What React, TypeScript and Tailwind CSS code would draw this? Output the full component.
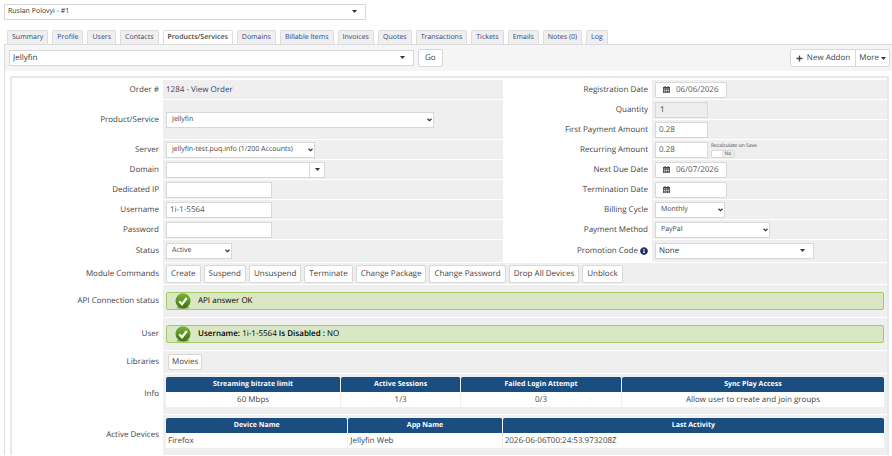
import type { ReactNode } from 'react';
import clsx from 'clsx';
import { FaPlus, FaInfoCircle } from 'react-icons/fa';

const tabs = [
  'Summary',
  'Profile',
  'Users',
  'Contacts',
  'Products/Services',
  'Domains',
  'Billable Items',
  'Invoices',
  'Quotes',
  'Transactions',
  'Tickets',
  'Emails',
  'Notes (0)',
  'Log',
];

const commands = [
  'Create',
  'Suspend',
  'Unsuspend',
  'Terminate',
  'Change Package',
  'Change Password',
  'Drop All Devices',
  'Unblock',
];

const field = 'h-4 border border-[#d8d8d8] bg-white px-[3px] leading-3 outline-none';
const button = 'h-[18px] border border-[#d8d8d8] bg-white leading-4 text-[#444] hover:bg-gray-50';

function Caret({ className }: { className?: string }) {
  return (
    <svg viewBox="0 0 10 6" className={clsx('pointer-events-none h-[3px] w-[5px] fill-[#333]', className)}>
      <path d="M0 0h10L5 6z" />
    </svg>
  );
}

interface SelectProps {
  id: string;
  value: string;
  className: string;
  label?: string;
  search?: boolean;
}

function Select({ id, value, className, label, search }: SelectProps) {
  return (
    <div className={clsx('relative', className)}>
      <select
        id={id}
        aria-label={label}
        className={clsx(
          field,
          'block w-full appearance-none',
          search ? 'text-[#333]' : 'pl-[5px] text-[7px] text-[#444]',
        )}
      >
        <option>{value}</option>
      </select>
      {search ? (
        <Caret className="absolute top-[6px] right-[9px]" />
      ) : (
        <svg viewBox="0 0 10 8" className="pointer-events-none absolute top-[6px] right-[2px] h-1 w-[5px]">
          <path d="M1 1.5l4 4 4-4" fill="none" stroke="#333" strokeWidth="2.4" />
        </svg>
      )}
    </div>
  );
}

function DateInput({ id, value }: { id: string; value?: string }) {
  return (
    <div className="flex h-4 w-[72px] items-center rounded-xs border border-[#d8d8d8] bg-white pl-[7px]">
      <svg viewBox="0 0 14 14" className="size-[7px] shrink-0">
        <path d="M3 0h2v2H3zM9 0h2v2H9zM0 2h14v12H0z" fill="#444" />
        <path d="M1.500 5h3v2.200h-3zM5.500 5h3v2.200h-3zM9.500 5h3v2.200h-3zM1.500 8h3v2h-3zM5.500 8h3v2h-3zM9.500 8h3v2h-3zM1.500 11h3v2h-3zM5.500 11h3v2h-3zM9.500 11h3v2h-3z" fill="#ccc" />
      </svg>
      <input id={id} defaultValue={value} className="ml-[6px] w-full min-w-0 leading-3 text-[#555] outline-none" />
    </div>
  );
}

function Label({ htmlFor, children, tall }: { htmlFor?: string; children: ReactNode; tall?: boolean }) {
  const cls = clsx('flex items-center justify-end pr-1 text-right', tall && 'row-span-2');
  if (!htmlFor) return <div className={cls}>{children}</div>;
  return <label htmlFor={htmlFor} className={cls}>{children}</label>;
}

function Cell({ children, className }: { children: ReactNode; className?: string }) {
  return <div className={clsx('flex min-w-0 items-center bg-[#efefef] px-[3px]', className)}>{children}</div>;
}

function WideRow({ label, children, className }: { label: string; children: ReactNode; className: string }) {
  return (
    <>
      <Label>{label}</Label>
      <Cell className={clsx('col-span-3', className)}>{children}</Cell>
    </>
  );
}

function SuccessBox({ children }: { children: ReactNode }) {
  return (
    <div className="flex h-[18px] w-full items-center gap-[7px] rounded-xs border border-[#a5ca62] bg-[#d9e7c4] pl-2 text-black">
      <svg viewBox="0 0 32 32" className="size-4">
        <defs>
          <linearGradient id="ok" x1="0" y1="0" x2="0" y2="1">
            <stop offset="0" stopColor="#7fb23a" />
            <stop offset="0.5" stopColor="#5b9420" />
            <stop offset="1" stopColor="#3c720c" />
          </linearGradient>
        </defs>
        <ellipse cx="16" cy="29" rx="13" ry="3" fill="#8aa368" />
        <circle cx="16" cy="15.5" r="15" fill="url(#ok)" />
        <path d="M8.500 16.500l5.500 6 9.500-12.500" fill="none" stroke="#fff" strokeWidth="4.500" />
      </svg>
      <p>{children}</p>
    </div>
  );
}

interface DataTableProps {
  columns: { title: string; width: string }[];
  row: string[];
  center?: boolean;
}

function DataTable({ columns, row, center }: DataTableProps) {
  return (
    <table className="w-full table-fixed border-separate border-spacing-0">
      <thead>
        <tr className="h-[15px] text-[7px] text-white">
          {columns.map((c) => (
            <th
              key={c.title}
              className={clsx(c.width, 'rounded-t-xs border-r border-[#efefef] bg-[#1a4d80] p-0 text-center font-bold last:border-r-0')}
            >
              {c.title}
            </th>
          ))}
        </tr>
      </thead>
      <tbody>
        <tr className="h-[15px]">
          {row.map((value) => (
            <td
              key={value}
              className={clsx('border-r border-[#efefef] bg-white px-[2px] py-0 last:border-r-0', center && 'text-center')}
            >
              {value}
            </td>
          ))}
        </tr>
      </tbody>
    </table>
  );
}

export default function App() {
  return (
    <div className="bg-white pt-1 pl-1 font-['Open_Sans','Noto_Sans',sans-serif] text-[8px] leading-3 text-[#444] [text-rendering:geometricPrecision] [&_*]:[text-rendering:inherit]">
      <Select id="client" label="Client" value="Ruslan Polovyi - #1" className="w-[362px] text-[7px]" search />

      <nav className="mt-[10px] flex gap-1 pl-[3px] text-[7px]">
        {tabs.map((tab) => (
          <a
            key={tab}
            href="#"
            className={clsx(
              'h-[14px] rounded-t-xs border border-b-0 border-[#dcdcdc] px-1 leading-[14px] whitespace-nowrap',
              tab === 'Products/Services' ? 'bg-white font-semibold text-[#444]' : 'bg-[#efefef] text-[#34457a]',
            )}
          >
            {tab}
          </a>
        ))}
      </nav>

      <main className="border-l border-[#dcdcdc]">
        <div className="flex h-[27px] items-center border-t border-[#dcdcdc] bg-[#f5f5f5] pr-[2px] pl-1">
          <Select id="service" label="Service" value="Jellyfin" className="w-[405px]" search />
          <button type="button" className={clsx(button, 'ml-1 rounded-xs px-[6px]')}>Go</button>
          <div className="ml-auto flex">
            <button type="button" className={clsx(button, 'flex items-center gap-1 rounded-l-xs px-[5px]')}>
              <FaPlus className="size-[7px]" /> New Addon
            </button>
            <button type="button" className={clsx(button, '-ml-px flex items-center gap-[2px] rounded-r-xs px-[3px]')}>
              More <Caret />
            </button>
          </div>
        </div>

        <form className="mt-[5px] mr-[3px] ml-[5px] grid grid-cols-[151fr_340fr_149fr_235fr] gap-y-px rounded-t-xs border-2 border-b-0 border-[#e3e9ed] pt-[2px]">
          <Label>Order #</Label>
          <Cell className="h-[19px]">
            <span>1284 - <a href="#" className="text-[#2b3f73]">View Order</a></span>
          </Cell>
          <Label htmlFor="regdate">Registration Date</Label>
          <Cell><DateInput id="regdate" value="06/06/2026" /></Cell>

          <Label htmlFor="product" tall>Product/Service</Label>
          <Cell className="row-span-2">
            <Select id="product" value="Jellyfin" className="w-[268px]" />
          </Cell>
          <Label htmlFor="qty">Quantity</Label>
          <Cell className="h-[19px]">
            <input id="qty" defaultValue="1" disabled className="h-4 w-[53px] border border-[#d8d8d8] bg-[#ededed] px-1" />
          </Cell>
          <Label htmlFor="first">First Payment Amount</Label>
          <Cell className="h-[19px]">
            <input id="first" defaultValue="0.28" className={clsx(field, 'w-[53px] text-[#555]')} />
          </Cell>

          <Label htmlFor="server">Server</Label>
          <Cell className="h-[19px]">
            <Select id="server" value="jellyfin-test.puq.info (1/200 Accounts)" className="w-[149px]" />
          </Cell>
          <Label htmlFor="recurring">Recurring Amount</Label>
          <Cell>
            <input id="recurring" defaultValue="0.28" className={clsx(field, 'w-[53px] text-[#555]')} />
            <label className="ml-[3px] text-[5px] leading-2">
              <span className="block">Recalculate on Save</span>
              <input type="checkbox" className="sr-only" />
              <span className="flex h-2 w-6 overflow-hidden rounded-xs border border-[#d8d8d8] bg-white leading-[6px]">
                <span className="ml-auto w-3 bg-[#ececec] text-center">No</span>
              </span>
            </label>
          </Cell>

          <Label htmlFor="domain">Domain</Label>
          <Cell className="h-[19px]">
            <input id="domain" className={clsx(field, 'w-[144px]')} />
            <button type="button" aria-label="Domain options" className="-ml-px flex h-4 w-4 items-center justify-center border border-[#d8d8d8] bg-white">
              <Caret />
            </button>
          </Cell>
          <Label htmlFor="nextdue">Next Due Date</Label>
          <Cell><DateInput id="nextdue" value="06/07/2026" /></Cell>

          <Label htmlFor="ip">Dedicated IP</Label>
          <Cell className="h-[19px]">
            <input id="ip" className={clsx(field, 'w-[106px]')} />
          </Cell>
          <Label htmlFor="termination">Termination Date</Label>
          <Cell><DateInput id="termination" /></Cell>

          <Label htmlFor="username">Username</Label>
          <Cell className="h-[19px]">
            <input id="username" defaultValue="1i-1-5564" className={clsx(field, 'w-[106px] text-[#555]')} />
          </Cell>
          <Label htmlFor="cycle">Billing Cycle</Label>
          <Cell><Select id="cycle" value="Monthly" className="w-[70px]" /></Cell>

          <Label htmlFor="password">Password</Label>
          <Cell className="h-[19px]">
            <input id="password" className={clsx(field, 'w-[106px]')} />
          </Cell>
          <Label htmlFor="payment">Payment Method</Label>
          <Cell><Select id="payment" value="PayPal" className="w-[115px]" /></Cell>

          <Label htmlFor="status">Status</Label>
          <Cell className="h-[22px]">
            <Select id="status" value="Active" className="w-[66px]" />
          </Cell>
          <Label htmlFor="promo">
            Promotion Code <FaInfoCircle className="ml-[2px] size-2 text-[#1b2f66]" />
          </Label>
          <Cell><Select id="promo" value="None" className="w-[159px]" search /></Cell>

          <WideRow label="Module Commands" className="h-[21px] gap-[3px]">
            {commands.map((command) => (
              <button key={command} type="button" className={clsx(button, 'rounded-xs px-1 whitespace-nowrap')}>
                {command}
              </button>
            ))}
          </WideRow>

          <WideRow label="API Connection status" className="h-8">
            <SuccessBox>API answer OK</SuccessBox>
          </WideRow>

          <WideRow label="User" className="h-8">
            <SuccessBox>
              <b className="font-semibold">Username:</b> 1i-1-5564 <b className="font-semibold">Is Disabled :</b> NO
            </SuccessBox>
          </WideRow>

          <WideRow label="Libraries" className="h-[22px]">
            <button type="button" className="ml-[2px] h-4 rounded-xs border border-[#d8d8d8] bg-white px-[3px] leading-3">Movies</button>
          </WideRow>

          <WideRow label="Info" className="h-10 pb-1">
            <DataTable
              center
              columns={[
                { title: 'Streaming bitrate limit', width: 'w-[24.4%]' },
                { title: 'Active Sessions', width: 'w-[16.7%]' },
                { title: 'Failed Login Attempt', width: 'w-[22.4%]' },
                { title: 'Sync Play Access', width: 'w-[36.5%]' },
              ]}
              row={['60 Mbps', '1/3', '0/3', 'Allow user to create and join groups']}
            />
          </WideRow>

          <WideRow label="Active Devices" className="h-10 pb-1">
            <DataTable
              columns={[
                { title: 'Device Name', width: 'w-[25.4%]' },
                { title: 'App Name', width: 'w-[21.5%]' },
                { title: 'Last Activity', width: 'w-[53.1%]' },
              ]}
              row={['Firefox', 'Jellyfin Web', '2026-06-06T00:24:53.973208Z']}
            />
          </WideRow>
        </form>
      </main>
    </div>
  );
}
